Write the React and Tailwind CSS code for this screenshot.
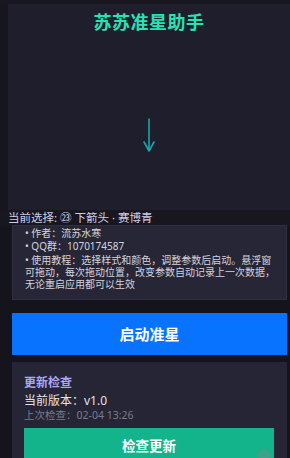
import React from "react";

const font = { fontFamily: '"Noto Sans", "Noto Sans CJK SC", sans-serif' };

export default function App() {
  return (
    <div
      style={font}
      className="w-[290px] h-[458px] bg-[#15141c] overflow-hidden relative flex flex-col"
    >
      {/* 预览区 */}
      <div className="h-[4px] shrink-0 bg-[#18171f]" />
      <div className="flex shrink-0">
        <div className="w-[8px] bg-[#17161e]" />
        <div className="flex-1 h-[206px] bg-[#1f1e2c] flex flex-col items-center">
          <h1 className="mt-[5px] text-[18px] leading-[26px] font-bold text-[#26e3b3] tracking-[0.5px]">
            苏苏准星助手
          </h1>
          <svg width="16" height="38" viewBox="0 0 16 38" className="mt-[82px]">
            <path
              d="M8 2 V34 M3 25 L8 34 L13 25"
              fill="none"
              stroke="#1aa6aa"
              strokeWidth="1.6"
              strokeLinecap="round"
              strokeLinejoin="round"
            />
          </svg>
        </div>
      </div>

      <div className="h-[16px] shrink-0 bg-[#18171f] pl-[8px] text-[11.5px] leading-[16px] text-[#cfcde6] whitespace-nowrap">
        当前选择: ㉓ 下箭头 · 赛博青
      </div>

      {/* 说明 */}
      <div className="shrink-0 mx-[12px] -mt-[1px] w-[275px] h-[75px] bg-[#262636] border border-[#2f2f42] pl-[12px] pr-[6px] pt-[1px] text-[10px] leading-[12px] text-[#d4d3de]">
        <p>• 作者：流苏水寒</p>
        <p className="mt-[1px]">• QQ群：1070174587</p>
        <p className="mt-[2px]">
          • 使用教程：选择样式和颜色，调整参数后启动。悬浮窗可拖动，每次拖动位置，改变参数自动记录上一次数据，无论重启应用都可以生效
        </p>
      </div>

      <button className="mx-[12px] mt-[13px] w-[275px] h-[42px] shrink-0 bg-[#0873ff] text-white text-[15px] font-bold">
        启动准星
      </button>

      {/* 更新检查 */}
      <div className="mx-[12px] mt-[7px] w-[275px] flex-1 bg-[#252535] pl-[12px] pr-[13px] pt-[13px]">
        <div className="text-[12px] leading-[16px] font-bold text-[#aca8f2]">更新检查</div>
        <div className="mt-[2px] text-[12px] leading-[16px] text-[#e4e3ea]">当前版本：v1.0</div>
        <div className="text-[10.5px] leading-[13px] text-[#7c7b8c]">上次检查：02-04 13:26</div>
        <button className="mt-[6px] w-[250px] h-[36px] bg-[#13b38b] text-white text-[13.5px] font-bold">
          检查更新
        </button>
      </div>

      <div className="absolute left-[257px] top-[449px] w-[14px] h-[14px] rounded-full bg-[#6a8f88]/50" />
    </div>
  );
}
